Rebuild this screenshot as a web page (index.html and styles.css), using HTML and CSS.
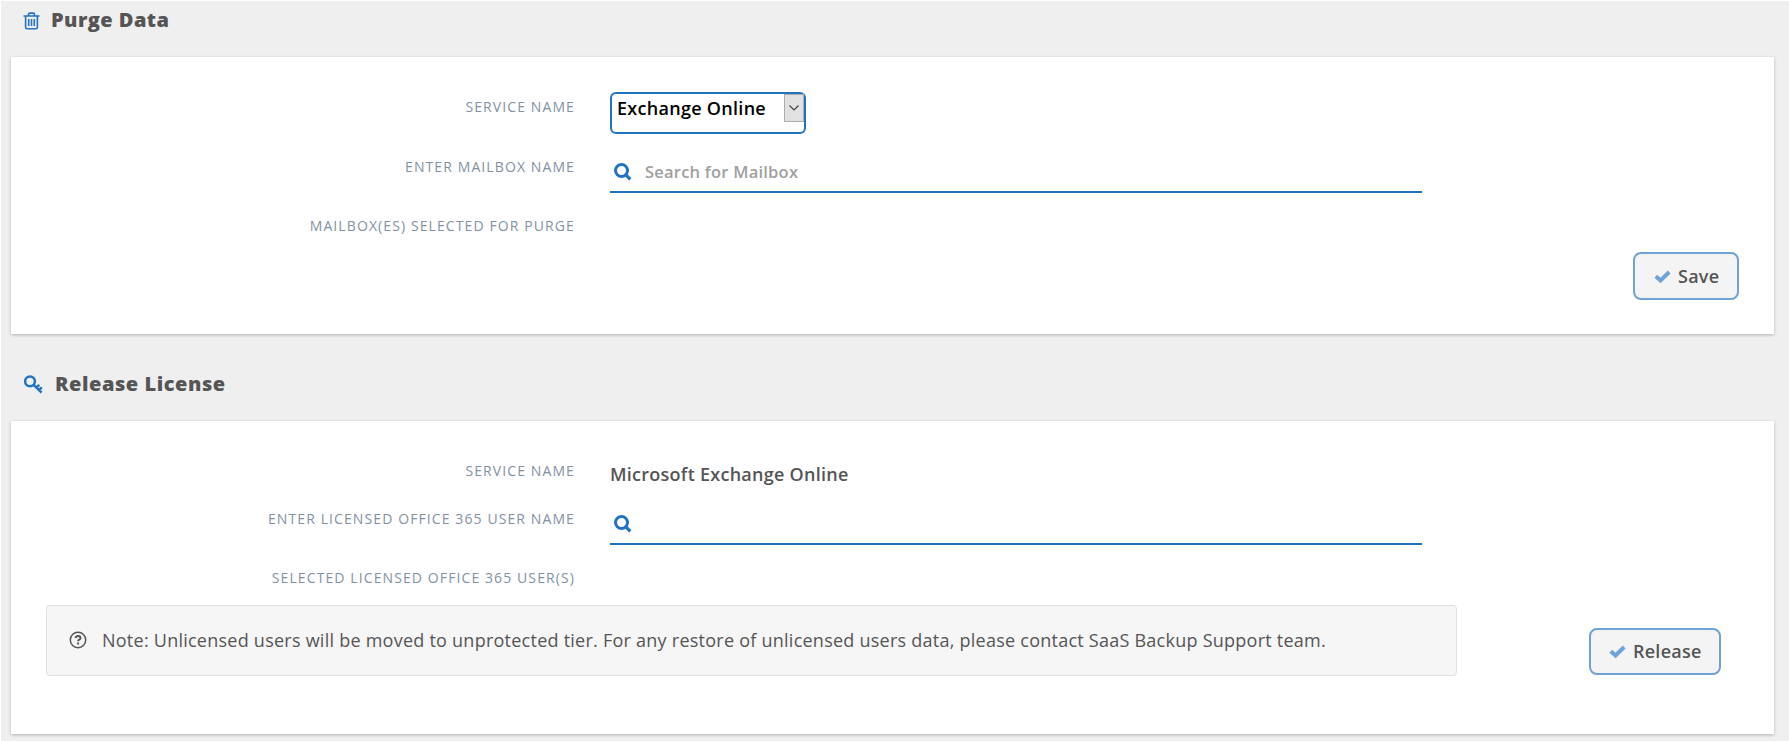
FILE: index.html
```html
<!DOCTYPE html>
<html lang="en">
<head>
<meta charset="utf-8">
<title>Purge Data</title>
<link rel="stylesheet" href="styles.css">
</head>
<body>
<main class="page">
  <h2 class="heading">
    <svg class="icon-trash" viewBox="0 0 17 18"><path d="M.5 4h16M5.500 3.600V2.500q0-1.400 1.400-1.400h3.200q1.400 0 1.400 1.400v1.100M2.600 4v11.200q0 1.500 1.500 1.500h8.800q1.500 0 1.500-1.500V4M5.700 7v7M8.500 7v7M11.300 7v7"/></svg>
    <span class="title-purge">Purge Data</span>
  </h2>
  <section class="card card-purge">
    <div class="row row-select">
      <label class="label">SERVICE NAME</label>
      <div class="select">
        <span class="select-value">Exchange Online</span>
        <span class="select-arrow"><svg viewBox="0 0 12 8"><path d="M1.500 1.500 6 6l4.500-4.500"/></svg></span>
      </div>
    </div>
    <div class="row row-search">
      <label class="label">ENTER MAILBOX NAME</label>
      <div class="search">
        <svg class="icon-search" viewBox="0 0 18 18"><circle cx="7.500" cy="7.500" r="6"/><path d="m12 12 4.300 4.300"/></svg>
        <span class="placeholder">Search for Mailbox</span>
      </div>
    </div>
    <div class="row">
      <label class="label">MAILBOX(ES) SELECTED FOR PURGE</label>
    </div>
    <div class="actions">
      <button class="button button-save" type="button"><svg class="icon-check" viewBox="0 0 17 13"><path d="m1.800 6.200 4.700 4.300L15.200 2"/></svg><span class="save-text">Save</span></button>
    </div>
  </section>
  <h2 class="heading heading-release">
    <svg class="icon-key" viewBox="0 0 20 19"><circle cx="7" cy="6.300" r="4.900"/><path d="m10.600 9.800 8 7.900M13.300 12.600l3-2.700M15.900 15.100l2.900-2.700"/></svg>
    <span class="title-release">Release License</span>
  </h2>
  <section class="card card-release">
    <div class="row row-service">
      <label class="label">SERVICE NAME</label>
      <span class="service">Microsoft Exchange Online</span>
    </div>
    <div class="row row-user">
      <label class="label">ENTER LICENSED OFFICE 365 USER NAME</label>
      <div class="search">
        <svg class="icon-search" viewBox="0 0 18 18"><circle cx="7.500" cy="7.500" r="6"/><path d="m12 12 4.300 4.300"/></svg>
      </div>
    </div>
    <div class="row row-selected">
      <label class="label">SELECTED LICENSED OFFICE 365 USER(S)</label>
    </div>
    <div class="footer">
      <div class="note">
        <svg class="icon-help" viewBox="0 0 18 18"><circle cx="9" cy="9" r="7.700"/><path d="M6.500 7q.4-2 2.600-2 2.400 0 2.400 1.900 0 1.100-1.200 1.700-1.200.6-1.200 1.700M9.100 11.600v2"/></svg>
        <span class="note-text">Note: Unlicensed users will be moved to unprotected tier. For any restore of unlicensed users data, please contact SaaS Backup Support team.</span>
      </div>
      <button class="button button-release" type="button"><svg class="icon-check" viewBox="0 0 17 13"><path d="m1.800 6.200 4.700 4.300L15.200 2"/></svg><span class="release-text">Release</span></button>
    </div>
  </section>
</main>
</body>
</html>
```
FILE: styles.css
```css
* { box-sizing: border-box; }
body { margin: 0; background: #fff; font-family: "Open Sans", sans-serif; color: #555; }
svg { display: block; flex: none; fill: none; stroke: currentColor; }
.page { height: 740px; margin: 1px 0 0 1px; padding: 5px 15px 0 10px; background: #efefef; overflow: hidden; }
.heading { display: flex; align-items: flex-start; height: 51px; margin: 0; padding-left: 12px; font-size: 20px; line-height: 28px; font-weight: 800; letter-spacing: .45px; white-space: nowrap; }
.heading-release { height: 87px; padding-top: 36px; letter-spacing: .55px; }
.icon-trash { width: 17px; height: 18px; margin: 6px 11px 0 0; color: #2273c3; stroke-width: 1.6; }
.icon-key { width: 20px; height: 19px; margin: 5px 12px 0 0; color: #2273c3; stroke-width: 2.5; }
.card { padding: 35px 35px 0; background: #fff; box-shadow: 0 1px 3px rgba(0, 0, 0, .25); }
.card-purge { height: 277px; }
.card-release { height: 313px; }
.row { display: grid; grid-template-columns: 529px 812px; column-gap: 35px; align-items: start; }
.label { padding-top: 5px; text-align: right; font-size: 14px; line-height: 20px; letter-spacing: 1.100px; color: #8292a4; white-space: nowrap; }
.row-select { height: 60px; }
.row-search { height: 59px; }
.select { display: flex; justify-content: space-between; width: 196px; height: 42px; padding-left: 5px; border: 2px solid #2273c3; border-radius: 6px; color: #000; }
.select-value { font-size: 18px; line-height: 28px; font-weight: 600; letter-spacing: .29px; white-space: nowrap; }
.select-arrow { display: grid; place-items: center; width: 20px; height: 28px; border: 1px solid #adadad; background: #e1e1e1; color: #444; }
.select-arrow svg { width: 12px; height: 8px; stroke-width: 1.2; }
.search { display: flex; height: 41px; padding: 11px 0 0 4px; border-bottom: 2px solid #2273c3; }
.icon-search { width: 18px; height: 18px; color: #2273c3; stroke-width: 3; }
.icon-search path { stroke-width: 3.3; }
.placeholder { margin-left: 13px; font-size: 16.500px; line-height: 18px; font-weight: 600; letter-spacing: .23px; color: #a0a0a0; white-space: nowrap; }
.actions { display: flex; justify-content: flex-end; margin-top: 16px; }
.button { display: flex; align-items: center; height: 48px; margin: 0; padding: 0 0 0 19px; border: 2px solid #6fa3d8; border-radius: 8px; background: #f4f4f4; color: #555; font: 600 18px/24px "Open Sans", sans-serif; letter-spacing: .25px; white-space: nowrap; }
.button-save { width: 106px; }
.button-release { width: 132px; height: 47px; margin-top: 23px; padding: 0 0 1px 18px; }
.icon-check { width: 17px; height: 13px; margin: 1px 7px 0 0; color: #6fa3d8; stroke-width: 4; }
.row-service { height: 48px; }
.service { font-size: 18px; line-height: 24px; padding-top: 6px; font-weight: 600; letter-spacing: .26px; white-space: nowrap; }
.row-user { height: 59px; }
.row-selected { height: 42px; }
.footer { display: grid; grid-template-columns: 1411px 132px; column-gap: 132px; align-items: start; }
.note { display: flex; align-items: center; height: 71px; padding: 0 0 1px 22px; border: 1px solid #e0e0e0; border-radius: 4px; background: #f6f6f6; }
.icon-help { width: 18px; height: 18px; stroke-width: 1.5; }
.icon-help path { stroke-width: 2; }
.note-text { margin-left: 15px; font-size: 18px; line-height: 24px; letter-spacing: .245px; white-space: nowrap; }
```
